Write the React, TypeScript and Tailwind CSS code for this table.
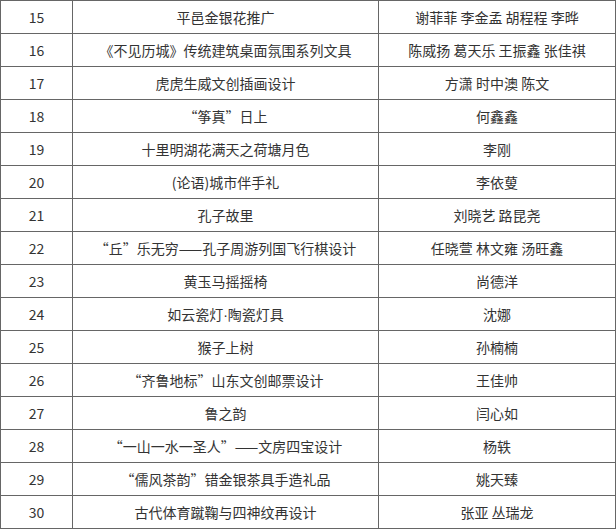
import React from "react";

const rows: [string, React.ReactNode, string][] = [
  ["15", "平邑金银花推广", "谢菲菲 李金孟 胡程程 李晔"],
  ["16", "《不见历城》传统建筑桌面氛围系列文具", "陈威扬 葛天乐 王振鑫 张佳祺"],
  ["17", "虎虎生威文创插画设计", "方潇 时中澳 陈文"],
  ["18", "“筝真”日上", "何鑫鑫"],
  ["19", "十里明湖花满天之荷塘月色", "李刚"],
  ["20", "(论语)城市伴手礼", "李依蓃"],
  ["21", "孔子故里", "刘晓艺 路昆尧"],
  ["22", "“丘”乐无穷——孔子周游列国飞行棋设计", "任晓萱 林文雍 汤旺鑫"],
  ["23", "黄玉马摇摇椅", "尚德洋"],
  [
    "24",
    <>
      如云瓷灯<span style={{ fontFamily: '"Liberation Sans", sans-serif' }}>·</span>陶瓷灯具
    </>,
    "沈娜",
  ],
  ["25", "猴子上树", "孙楠楠"],
  ["26", "“齐鲁地标”山东文创邮票设计", "王佳帅"],
  ["27", "鲁之韵", "闫心如"],
  ["28", "“一山一水一圣人”——文房四宝设计", "杨轶"],
  ["29", "“儒风茶韵”错金银茶具手造礼品", "姚天臻"],
  ["30", "古代体育蹴鞠与四神纹再设计", "张亚 丛瑞龙"],
];

export default function App() {
  return (
    <div className="w-[616px] bg-white">
      <table
        className="w-[615px] border-collapse table-fixed text-[14px] text-[#333]"
        style={{ fontFamily: '"Noto Sans CJK SC", "Noto Sans", sans-serif' }}
      >
        <colgroup>
          <col className="w-[72px]" />
          <col className="w-[306px]" />
          <col className="w-[237px]" />
        </colgroup>
        <tbody>
          {rows.map((r) => (
            <tr key={r[0]} className="h-[33px]">
              <td className="border border-[#666] text-center p-0 leading-none">{r[0]}</td>
              <td className="border border-[#666] text-center p-0 leading-none whitespace-nowrap">{r[1]}</td>
              <td className="border border-[#666] text-center p-0 leading-none whitespace-nowrap">{r[2]}</td>
            </tr>
          ))}
        </tbody>
      </table>
    </div>
  );
}
